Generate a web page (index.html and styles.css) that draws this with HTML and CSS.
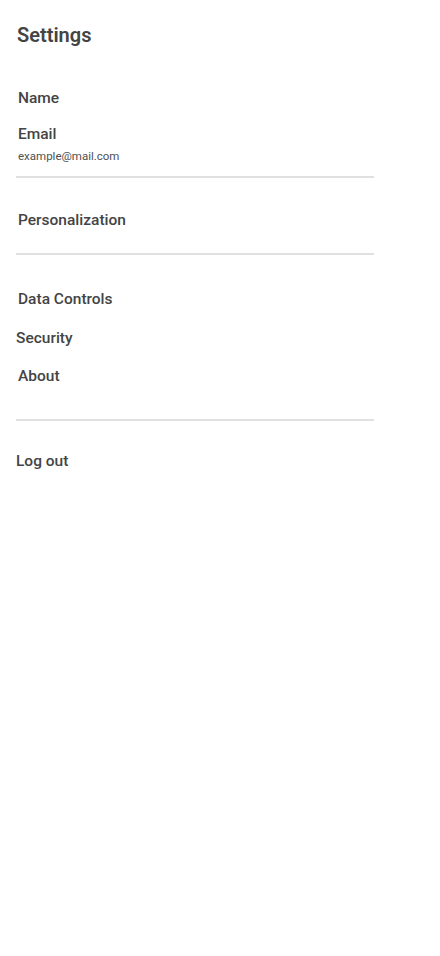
FILE: index.html
```html
<!DOCTYPE html>
<html>
<head>
<meta charset="utf-8">
<link rel="stylesheet" href="styles.css">
</head>
<body>
<div class="page">
  <h1 class="title">Settings</h1>
  <div class="group group-account">
    <div class="item item-name">Name</div>
    <div class="item item-email">
      <div>Email</div>
      <div class="sub">example@mail.com</div>
    </div>
  </div>
  <hr class="divider">
  <div class="group group-personal">
    <div class="item">Personalization</div>
  </div>
  <hr class="divider">
  <div class="group group-data">
    <div class="item item-data">Data Controls</div>
    <div class="item item-security flush">Security</div>
    <div class="item item-about">About</div>
  </div>
  <hr class="divider">
  <div class="group group-logout">
    <div class="item flush">Log out</div>
  </div>
</div>
</body>
</html>
```

FILE: styles.css
```css
html, body {
  margin: 0;
  padding: 0;
  background: #fff;
}
body {
  font-family: Roboto, "Noto Sans", sans-serif;
  color: #444;
}
.page {
  width: 358px;
  padding: 0 16px;
}
.title {
  margin: 0;
  padding-top: 23px;
  padding-left: 1px;
  font-size: 20px;
  line-height: 24px;
  font-weight: 600;
  height: 24px;
}
.item {
  font-size: 15.5px;
  font-weight: 500;
  line-height: 20px;
  padding-left: 2px;
}
.item.flush {
  padding-left: 0;
}
.group-account {
  padding-top: 41px;
}
.item-email {
  margin-top: 16px;
}
.sub {
  margin-top: 4px;
  font-size: 11.5px;
  font-weight: 400;
  line-height: 16px;
  color: #505050;
}
.divider {
  margin: 0;
  border: 0;
  height: 2px;
  background: #e0e0e0;
}
.group-account + .divider {
  margin-top: 12px;
}
.group-personal {
  padding-top: 32px;
  padding-bottom: 23px;
}
.group-data {
  padding-top: 34px;
}
.item-security {
  margin-top: 19px;
}
.item-about {
  margin-top: 18px;
}
.group-data + .divider {
  margin-top: 33px;
}
.group-logout {
  padding-top: 30px;
}
```
